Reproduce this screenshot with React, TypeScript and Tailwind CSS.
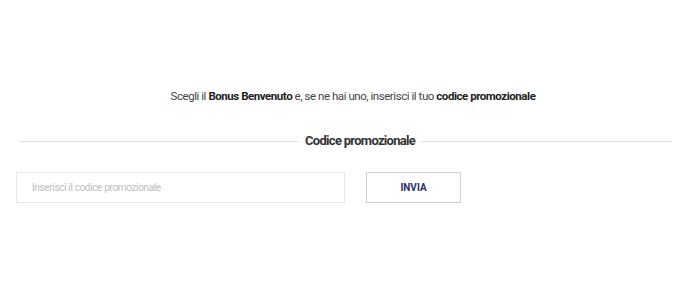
export default function App() {
  return (
    <div className="h-[300px] w-[700px] bg-white font-['Roboto',sans-serif] text-[#333]">
      <div className="px-4 pt-[88px]">
        <p className="pl-[6px] text-center text-[11.5px] leading-[16px] tracking-[-0.45px] text-[#444]">
          Scegli il <b className="font-bold text-[#222]">Bonus Benvenuto</b> e, se ne hai uno, inserisci il tuo{' '}
          <b className="font-bold text-[#222]">codice promozionale</b>
        </p>

        <div className="mt-[28px] flex items-center gap-[7px] pl-1 pr-3">
          <div className="h-px w-[278px] bg-[#dcdcdc]" />
          <h2 className="text-[13px] font-bold leading-[18px] tracking-[-0.7px] text-[#333]">Codice promozionale</h2>
          <div className="h-px flex-1 bg-[#dcdcdc]" />
        </div>

        <form className="mt-[22px] flex items-center gap-[21px]" onSubmit={(e) => e.preventDefault()}>
          <input
            placeholder="Inserisci il codice promozionale"
            className="h-[31px] w-[329px] border border-[#e6e6e6] px-[15px] text-[10px] tracking-[-0.35px] outline-none placeholder:text-[#bdbdbd]"
          />
          <button
            type="submit"
            className="h-[31px] w-[95px] border border-[#cfcfcf] bg-white text-[10px] font-bold text-[#2b2d6e]"
          >
            INVIA
          </button>
        </form>
      </div>
    </div>
  );
}
